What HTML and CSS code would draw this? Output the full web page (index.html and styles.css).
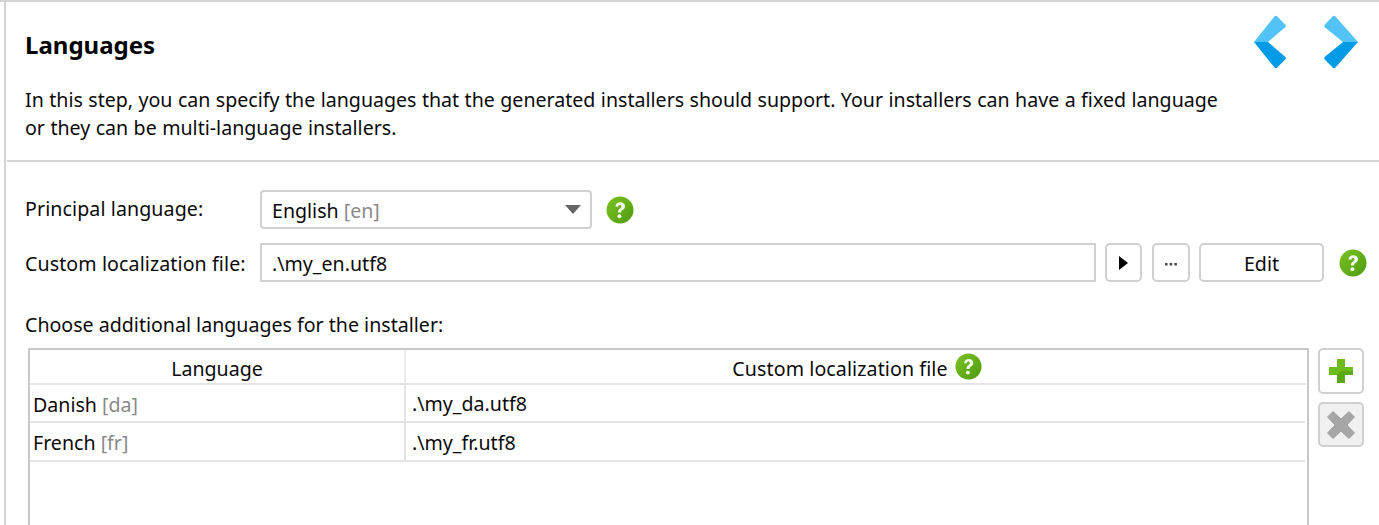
FILE: index.html
```html
<!DOCTYPE html>
<html lang="en">
<head>
<meta charset="utf-8">
<title>Languages</title>
<link rel="stylesheet" href="styles.css">
</head>
<body>
<svg class="defs" width="0" height="0" aria-hidden="true">
  <defs>
    <linearGradient id="helpfill" x1="0" y1="0" x2="1" y2="1">
      <stop offset="0" stop-color="#7cc322"/>
      <stop offset="1" stop-color="#4d9a10"/>
    </linearGradient>
    <symbol id="help" viewBox="0 0 28 28">
      <circle cx="14" cy="14" r="13.5" fill="url(#helpfill)"/>
      <path d="M9.4 10.6c.3-2.9 2.2-4.4 4.9-4.4 2.800 0 4.700 1.600 4.700 4 0 1.900-1 2.900-2.300 3.800-1.200.8-1.600 1.300-1.600 2.600h-3.200c-.1-2.100.6-3.200 2-4.200 1-.7 1.500-1.200 1.500-2 0-.9-.6-1.500-1.500-1.500-1 0-1.500.7-1.600 1.800z" fill="#f2f8ea"/>
      <circle cx="13.400" cy="20.300" r="2" fill="#f2f8ea"/>
    </symbol>
  </defs>
</svg>
<main class="panel">
  <header class="intro">
    <div class="intro-text">
      <h1 class="title">Languages</h1>
      <p class="desc">In this step, you can specify the languages that the generated installers should support. Your installers can have a fixed language or they can be multi-language installers.</p>
    </div>
    <nav class="pager">
      <svg class="arrow" viewBox="0 0 36 54" width="36" height="54">
        <path d="M22.500 1.500 a2 2 0 0 1 2.800 0 l7.900 7.900 a2 2 0 0 1 0 2.800 L16 27 H2 z" fill="#52c2f7"/>
        <path d="M2 27 H16 L33.200 41.800 a2 2 0 0 1 0 2.800 l-7.900 7.900 a2 2 0 0 1-2.800 0 z" fill="#039be5"/>
      </svg>
      <svg class="arrow" viewBox="0 0 36 54" width="36" height="54">
        <path d="M13.500 1.500 a2 2 0 0 0-2.800 0 l-7.900 7.900 a2 2 0 0 0 0 2.800 L21 27 H36 z" fill="#52c2f7"/>
        <path d="M36 27 H21 L2.800 41.800 a2 2 0 0 0 0 2.800 l7.900 7.900 a2 2 0 0 0 2.800 0 z" fill="#039be5"/>
      </svg>
    </nav>
  </header>
  <section class="form">
    <div class="row row-principal">
      <label class="label">Principal language:</label>
      <div class="select"><span>English <span class="code">[en]</span></span><i class="caret"></i></div>
      <svg class="help help-a"><use href="#help"/></svg>
    </div>
    <div class="row row-file">
      <label class="label">Custom localization file:</label>
      <div class="input">.\my_en.utf8</div>
      <button class="btn btn-play"><i class="play"></i></button>
      <button class="btn btn-dots"><svg width="12" height="3" viewBox="0 0 12 3"><path d="M0 0h2.500v2.500H0zM4.700 0h2.500v2.500H4.700zM9.400 0h2.500v2.500H9.400z" fill="#444"/></svg></button>
      <button class="btn btn-edit">Edit</button>
      <svg class="help help-b"><use href="#help"/></svg>
    </div>
    <p class="choose">Choose additional languages for the installer:</p>
    <div class="table-area">
      <div class="table">
        <div class="thead">
          <div class="th th-lang">Language</div>
          <div class="th th-file"><span class="th-label">Custom localization file</span><svg class="help help-c"><use href="#help"/></svg></div>
        </div>
        <div class="tr tr-first">
          <div class="td td-lang"><span>Danish <span class="code">[da]</span></span></div>
          <div class="td td-file">.\my_da.utf8</div>
        </div>
        <div class="tr">
          <div class="td td-lang"><span>French <span class="code">[fr]</span></span></div>
          <div class="td td-file">.\my_fr.utf8</div>
        </div>
      </div>
      <div class="side">
        <button class="side-btn">
          <svg width="26" height="26" viewBox="0 0 26 26"><path d="M9 1h8v8h8v8h-8v8H9v-8H1V9h8z" fill="#6dbb1d"/><path d="M13 13h12v4h-8v8H9v-8z" fill="#5aa812"/></svg>
        </button>
        <button class="side-btn side-off">
          <svg width="30" height="30" viewBox="0 0 30 30"><path d="M7 1.500 15 9l8-7.500 5.500 5.500L21 15l7.500 8-5.500 5.500L15 21l-8 7.500L1.500 23 9 15 1.500 7z" fill="#a6a6a6" stroke="#a6a6a6" stroke-linejoin="round"/></svg>
        </button>
      </div>
    </div>
  </section>
</main>
</body>
</html>
```
FILE: styles.css
```css
* { box-sizing: border-box; }
html, body { margin: 0; padding: 0; height: 525px; overflow: hidden; background: #fff; }
body {
  font-family: "Noto Sans", "Open Sans", sans-serif;
  font-size: 19.6px;
  color: #0a0a0a;
  border-top: 2px solid #d4d4d4;
}
.defs { position: absolute; }
.panel {
  margin-left: 4px;
  height: 523px;
  border-left: 2px solid #d4d4d4;
  overflow: hidden;
}
.intro {
  display: flex;
  justify-content: space-between;
  height: 160px;
  padding: 27px 21px 0 18px;
  border-bottom: 2px solid #d4d4d4;
  margin-left: 1px;
}
.intro-text { width: 1200px; flex: none; }
.title { margin: 0; font-size: 24px; font-weight: 700; line-height: 32px; color: #000; }
.desc { margin: 25px 0 0; line-height: 28px; word-spacing: 0.35px; }
.pager { display: flex; gap: 34px; margin-top: -14px; flex: none; height: 54px; margin-left: auto; }
.form { padding: 28px 0 0 19px; }
.row { display: flex; align-items: center; height: 39px; }
.row-file { margin-top: 14px; }
.label { width: 235px; flex: none; line-height: 28px; letter-spacing: 0.1px; }
.row-principal .label { position: relative; top: -1px; }
.row-file .label { padding-top: 3px; height: 31px; }
.select, .input, .btn, .side-btn {
  border: 2px solid #d0d0d0;
  background: #fff;
  font: inherit;
  color: inherit;
  height: 39px;
}
.select {
  width: 332px;
  border-radius: 4px;
  display: flex;
  align-items: center;
  justify-content: space-between;
  padding: 2px 9px 0 10px;
}
.code { color: #8a8a8a; }
.caret {
  width: 0; height: 0;
  margin-top: -2px;
  border-left: 8px solid transparent;
  border-right: 8px solid transparent;
  border-top: 9px solid #666;
}
.help { width: 28px; height: 28px; flex: none; }
.help-a { margin-left: 14px; }
.help-b { margin-left: 15px; }
.input {
  width: 836px;
  display: flex;
  align-items: center;
  padding: 2px 10px 0;
}
.btn {
  display: flex;
  align-items: center;
  justify-content: center;
  padding: 0;
  border-radius: 5px;
  margin-left: 9px;
}
.btn-play { width: 37px; }
.btn-dots { width: 38px; margin-left: 10px; padding-top: 3px; }
.btn-edit { width: 125px; padding-top: 2px; }
.play {
  width: 0; height: 0;
  border-top: 7px solid transparent;
  border-bottom: 7px solid transparent;
  border-left: 9px solid #000;
}
.choose { margin: 29px 0 0; line-height: 28px; }
.table-area { display: flex; gap: 9px; margin-top: 9px; padding-left: 3px; align-items: flex-start; }
.table {
  width: 1281px;
  height: 190px;
  border: 2px solid #c8c8c8;
  border-bottom: 0;
  flex: none;
}
.thead { display: flex; height: 35px; border-bottom: 2px solid #e4e4e4; margin-right: 1px; }
.th { display: flex; align-items: center; justify-content: center; height: 33px; padding-top: 4px; }
.th-lang { width: 376px; border-right: 2px solid #ececec; }
.th-file { flex: 1; gap: 7px; padding-left: 2px; }
.th-label { letter-spacing: 0.1px; }
.help-c { width: 27px; height: 27px; margin-top: -4px; }
.tr { display: flex; height: 38px; border-bottom: 2px solid #e4e4e4; margin-right: 2px; }
.tr:last-child { height: 39px; }
.td { display: flex; align-items: center; white-space: pre; padding-top: 1px; }
.tr-first .td-lang { padding-top: 3px; }
.td-lang { width: 374px; padding-left: 3px; }
.td-file { flex: 1; padding-left: 6px; border-left: 2px solid #e4e4e4; }
.side { display: flex; flex-direction: column; gap: 8px; flex: none; }
.side-btn {
  width: 46px;
  height: 46px;
  border-radius: 5px;
  padding: 0;
  display: flex;
  align-items: center;
  justify-content: center;
}
.side-off { background: #f0f0f0; height: 45px; }
```
